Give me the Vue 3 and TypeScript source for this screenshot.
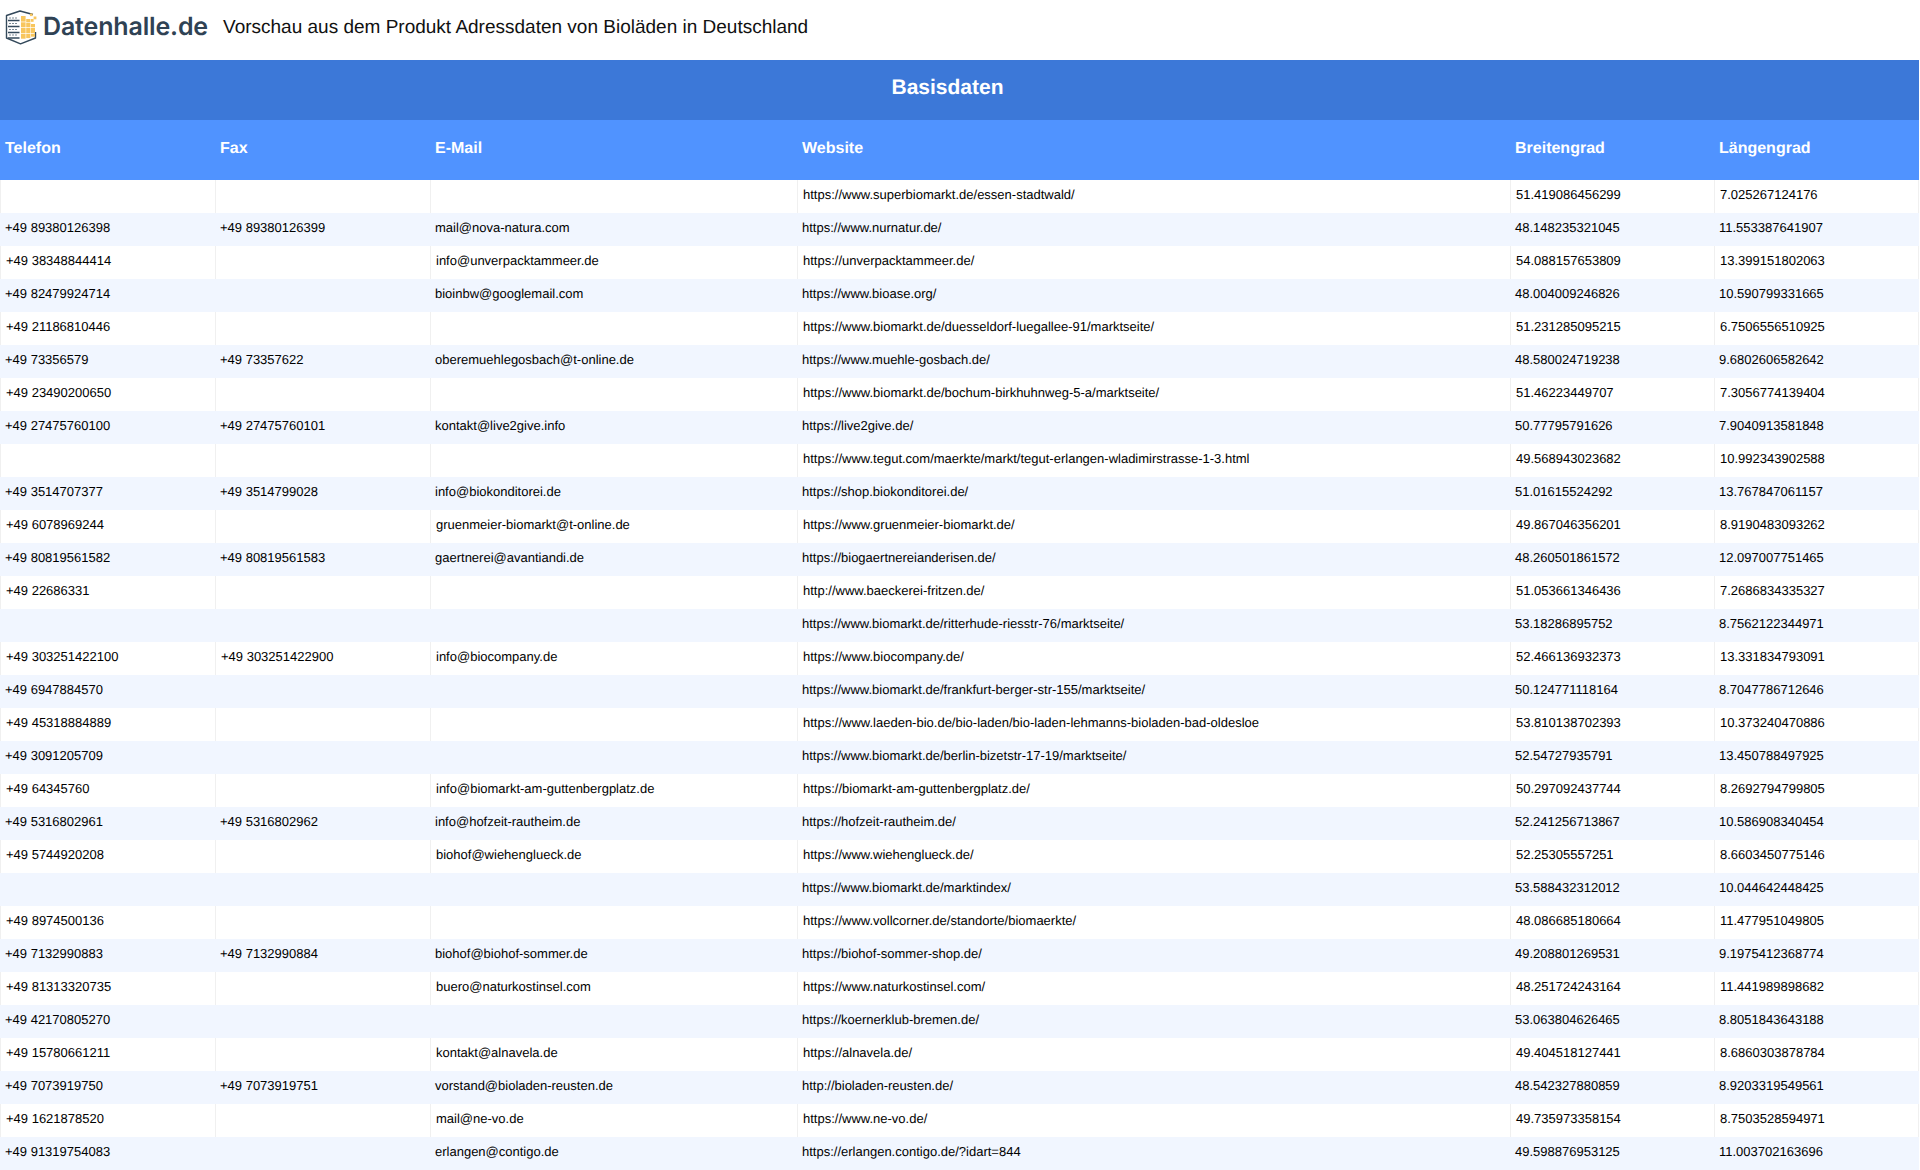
<script setup lang="ts">
type Row = [string, string, string, string, string, string]
const cols: string[] = ['Telefon', 'Fax', 'E-Mail', 'Website', 'Breitengrad', 'Längengrad']
const rows: Row[] = [
  ['', '', '', 'https://www.superbiomarkt.de/essen-stadtwald/', '51.419086456299', '7.025267124176'],
  ['+49 89380126398', '+49 89380126399', 'mail@nova-natura.com', 'https://www.nurnatur.de/', '48.148235321045', '11.553387641907'],
  ['+49 38348844414', '', 'info@unverpacktammeer.de', 'https://unverpacktammeer.de/', '54.088157653809', '13.399151802063'],
  ['+49 82479924714', '', 'bioinbw@googlemail.com', 'https://www.bioase.org/', '48.004009246826', '10.590799331665'],
  ['+49 21186810446', '', '', 'https://www.biomarkt.de/duesseldorf-luegallee-91/marktseite/', '51.231285095215', '6.7506556510925'],
  ['+49 73356579', '+49 73357622', 'oberemuehlegosbach@t-online.de', 'https://www.muehle-gosbach.de/', '48.580024719238', '9.6802606582642'],
  ['+49 23490200650', '', '', 'https://www.biomarkt.de/bochum-birkhuhnweg-5-a/marktseite/', '51.46223449707', '7.3056774139404'],
  ['+49 27475760100', '+49 27475760101', 'kontakt@live2give.info', 'https://live2give.de/', '50.77795791626', '7.9040913581848'],
  ['', '', '', 'https://www.tegut.com/maerkte/markt/tegut-erlangen-wladimirstrasse-1-3.html', '49.568943023682', '10.992343902588'],
  ['+49 3514707377', '+49 3514799028', 'info@biokonditorei.de', 'https://shop.biokonditorei.de/', '51.01615524292', '13.767847061157'],
  ['+49 6078969244', '', 'gruenmeier-biomarkt@t-online.de', 'https://www.gruenmeier-biomarkt.de/', '49.867046356201', '8.9190483093262'],
  ['+49 80819561582', '+49 80819561583', 'gaertnerei@avantiandi.de', 'https://biogaertnereianderisen.de/', '48.260501861572', '12.097007751465'],
  ['+49 22686331', '', '', 'http://www.baeckerei-fritzen.de/', '51.053661346436', '7.2686834335327'],
  ['', '', '', 'https://www.biomarkt.de/ritterhude-riesstr-76/marktseite/', '53.18286895752', '8.7562122344971'],
  ['+49 303251422100', '+49 303251422900', 'info@biocompany.de', 'https://www.biocompany.de/', '52.466136932373', '13.331834793091'],
  ['+49 6947884570', '', '', 'https://www.biomarkt.de/frankfurt-berger-str-155/marktseite/', '50.124771118164', '8.7047786712646'],
  ['+49 45318884889', '', '', 'https://www.laeden-bio.de/bio-laden/bio-laden-lehmanns-bioladen-bad-oldesloe', '53.810138702393', '10.373240470886'],
  ['+49 3091205709', '', '', 'https://www.biomarkt.de/berlin-bizetstr-17-19/marktseite/', '52.54727935791', '13.450788497925'],
  ['+49 64345760', '', 'info@biomarkt-am-guttenbergplatz.de', 'https://biomarkt-am-guttenbergplatz.de/', '50.297092437744', '8.2692794799805'],
  ['+49 5316802961', '+49 5316802962', 'info@hofzeit-rautheim.de', 'https://hofzeit-rautheim.de/', '52.241256713867', '10.586908340454'],
  ['+49 5744920208', '', 'biohof@wiehenglueck.de', 'https://www.wiehenglueck.de/', '52.25305557251', '8.6603450775146'],
  ['', '', '', 'https://www.biomarkt.de/marktindex/', '53.588432312012', '10.044642448425'],
  ['+49 8974500136', '', '', 'https://www.vollcorner.de/standorte/biomaerkte/', '48.086685180664', '11.477951049805'],
  ['+49 7132990883', '+49 7132990884', 'biohof@biohof-sommer.de', 'https://biohof-sommer-shop.de/', '49.208801269531', '9.1975412368774'],
  ['+49 81313320735', '', 'buero@naturkostinsel.com', 'https://www.naturkostinsel.com/', '48.251724243164', '11.441989898682'],
  ['+49 42170805270', '', '', 'https://koernerklub-bremen.de/', '53.063804626465', '8.8051843643188'],
  ['+49 15780661211', '', 'kontakt@alnavela.de', 'https://alnavela.de/', '49.404518127441', '8.6860303878784'],
  ['+49 7073919750', '+49 7073919751', 'vorstand@bioladen-reusten.de', 'http://bioladen-reusten.de/', '48.542327880859', '8.9203319549561'],
  ['+49 1621878520', '', 'mail@ne-vo.de', 'https://www.ne-vo.de/', '49.735973358154', '8.7503528594971'],
  ['+49 91319754083', '', 'erlangen@contigo.de', 'https://erlangen.contigo.de/?idart=844', '49.598876953125', '11.003702163696'],
]
</script>

<template>
  <div class="page">
    <header class="top">
      <div class="logo">
        <svg class="mark" width="33" height="35" viewBox="0 0 33 35" fill="none">
          <path d="M28 4.5 L15 1 L1.5 5.5 V28 L15.5 33.8 L30.5 28 V22" stroke="#34495b" stroke-width="1.4" stroke-linejoin="round" />
          <path d="M3 10.5 H14.5 M3 16.5 H14.5 M3 22.5 H14.5 M3 28 H14.5" stroke="#34495b" stroke-width="1.4" />
          <path d="M4 8 H12 M4 13.5 H12 M4 19.5 H12 M4 25 H12" stroke="#7d8a96" stroke-width="1" stroke-dasharray="2 1" />
          <g fill="#f8c65e">
            <rect x="16" y="6" width="4.6" height="5.6" />
            <rect x="21.2" y="9" width="4.2" height="3" />
            <rect x="16" y="12.3" width="4.6" height="5" />
            <rect x="21.2" y="12.6" width="4.2" height="4.7" />
            <rect x="26" y="14" width="4" height="3.3" />
            <rect x="16" y="18" width="4.6" height="5" />
            <rect x="21.2" y="18" width="4.2" height="5" />
            <rect x="26" y="18" width="4" height="5" />
            <rect x="16" y="23.7" width="4.6" height="5" />
            <rect x="21.2" y="23.7" width="4.2" height="4.4" />
            <rect x="26" y="23.7" width="4" height="3" />
            <rect x="25" y="3.5" width="2.6" height="2.6" />
            <rect x="28.6" y="6.5" width="2.8" height="2.8" />
            <rect x="26" y="9" width="2.6" height="2.8" />
          </g>
        </svg>
        <span class="word">Datenhalle.de</span>
      </div>
      <h1 class="title">Vorschau aus dem Produkt Adressdaten von Bioläden in Deutschland</h1>
    </header>
    <div class="band">Basisdaten</div>
    <table class="data">
      <colgroup>
        <col class="c1" /><col class="c2" /><col class="c3" /><col class="c4" /><col class="c5" /><col class="c6" />
      </colgroup>
      <thead>
        <tr>
          <th v-for="c in cols" :key="c">{{ c }}</th>
        </tr>
      </thead>
      <tbody>
        <tr v-for="(r, i) in rows" :key="i" :class="i % 2 ? 'even' : 'odd'">
          <td v-for="(v, j) in r" :key="j">{{ v }}</td>
        </tr>
      </tbody>
    </table>
  </div>
</template>

<style>
html, body { margin: 0; background: #fff; overflow: hidden; }
</style>

<style scoped>
.page {
  width: 1920px;
  height: 1170px;
  overflow: hidden;
  font-family: "Liberation Sans", Arial, sans-serif;
  color: #000;
  text-rendering: geometricPrecision;
}
.top {
  height: 60px;
  box-sizing: border-box;
  padding-bottom: 5px;
  display: flex;
  align-items: center;
  gap: 15px;
}
.logo {
  display: flex;
  align-items: center;
  gap: 5px;
  padding-left: 5px;
}
.mark { flex: none; }
.word {
  font-family: Inter, sans-serif;
  font-weight: 600;
  font-size: 25px;
  letter-spacing: -0.15px;
  color: #2f4254;
  line-height: 1;
}
.title {
  margin: 0;
  font-size: 19px;
  font-weight: 400;
  line-height: 1;
  color: #111;
}
.band {
  width: 1919px;
  height: 60px;
  background: #3c78d8;
  color: #fff;
  font-size: 21px;
  font-weight: 700;
  display: flex;
  align-items: center;
  justify-content: center;
  padding: 0 24px 5px 0;
  box-sizing: border-box;
}
.data {
  width: 1919px;
  table-layout: fixed;
  border-collapse: separate;
  border-spacing: 0;
}
.c1, .c2 { width: 215px; }
.c3 { width: 367px; }
.c4 { width: 713px; }
.c5 { width: 204px; }
.c6 { width: 205px; }
th {
  height: 60px;
  box-sizing: border-box;
  padding: 0 0 3px 5px;
  background: #5093ff;
  color: #fff;
  font-size: 16px;
  font-weight: 700;
  text-align: left;
}
td {
  height: 33px;
  padding: 0 0 5px 5px;
  font-size: 13px;
  box-sizing: border-box;
  white-space: nowrap;
}
.even td { background: #f1f6ff; }
.odd td { border-left: 1px solid #f0f0f0; }
.odd td:last-child { border-right: 1px solid #f0f0f0; }
</style>
